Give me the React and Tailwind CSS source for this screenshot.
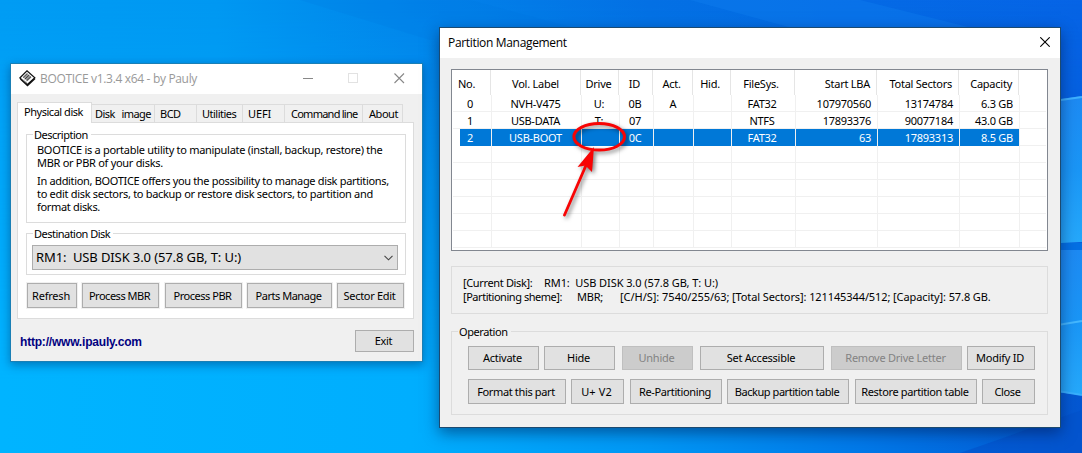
import React from "react";
import clsx from "clsx";

const TABS = [
  { label: "Disk  image", width: "w-[63px]", pad: "pl-[3px]", track: "tracking-[-0.55px] [word-spacing:1px]" },
  { label: "BCD", width: "w-[42px]", pad: "pl-[5px]", track: "tracking-[-0.5px]" },
  { label: "Utilities", width: "w-[46px]", pad: "pl-[5px]", track: "tracking-[-0.5px]" },
  { label: "UEFI", width: "w-[42px]", pad: "pl-[5px]", track: "tracking-[-0.1px]" },
  { label: "Command line", width: "w-[78px]", pad: "pl-[6px]", track: "tracking-[-0.75px]" },
  { label: "About", width: "w-[40px]", pad: "pl-[6px]", track: "tracking-[-0.45px]" },
];

const COLUMNS = [
  { key: "no", label: "No.", width: "w-[39px]", head: "pl-[5px]", cell: "pl-[14px]" },
  { key: "label", label: "Vol. Label", width: "w-[90px]", head: "text-center", cell: "text-center pr-[2px]" },
  { key: "drive", label: "Drive", width: "w-[38px]", head: "text-center pr-[2px]", cell: "text-center pr-[3px]" },
  { key: "id", label: "ID", width: "w-[34px]", head: "text-center pr-[2px]", cell: "text-center pr-[3px]" },
  { key: "act", label: "Act.", width: "w-[40px]", head: "text-center pr-[2px]", cell: "text-center pr-px" },
  { key: "hid", label: "Hid.", width: "w-[38px]", head: "text-center pr-[3px]", cell: "text-center" },
  { key: "fs", label: "FileSys.", width: "w-[64px]", head: "text-center pr-[3px]", cell: "text-center pr-[3px]" },
  { key: "lba", label: "Start LBA", width: "w-[82px]", head: "text-right pr-[6px]", cell: "text-right pr-[6px]" },
  { key: "total", label: "Total Sectors", width: "w-[82px]", head: "text-right pr-[6px]", cell: "text-right pr-[6px]" },
  { key: "cap", label: "Capacity", width: "w-[60px]", head: "text-right pr-[6px]", cell: "text-right pr-[6px]" },
];

const PARTITIONS = [
  { no: "0", label: "NVH-V475", drive: "U:", id: "0B", act: "A", fs: "FAT32", lba: "107970560", total: "13174784", cap: "6.3 GB" },
  { no: "1", label: "USB-DATA", drive: "T:", id: "07", fs: "NTFS", lba: "17893376", total: "90077184", cap: "43.0 GB" },
  { no: "2", label: "USB-BOOT", id: "0C", fs: "FAT32", lba: "63", total: "17893313", cap: "8.5 GB" },
  {},
  {},
  {},
  {},
  {},
  {},
];

const Button = ({ children, className, disabled }) => (
  <button
    disabled={disabled}
    className={clsx(
      "shrink-0 border whitespace-nowrap text-center leading-[13px] pb-px pr-[2px]",
      disabled
        ? "border-[#bfbfbf] bg-[#cccccc] text-[#838383]"
        : "border-[#adadad] bg-[#e1e1e1] text-black",
      className,
    )}
  >
    {children}
  </button>
);

const Group = ({ title, titleClass, className, children }) => (
  <fieldset className={clsx("border border-[#dcdcdc]", className)}>
    <legend className={clsx("ml-[6px] pl-[1px] pr-[3px] leading-[13px] whitespace-nowrap", titleClass)}>
      {title}
    </legend>
    {children}
  </fieldset>
);

const Wallpaper = () => (
  <svg className="absolute inset-0" width="1082" height="453" viewBox="0 0 1082 453" preserveAspectRatio="none">
    <defs>
      <linearGradient id="sky" x1="0" y1="0" x2="1" y2="0">
        <stop offset="0" stopColor="#009cf4" />
        <stop offset="0.2" stopColor="#0098f2" />
        <stop offset="0.38" stopColor="#0284ea" />
        <stop offset="0.6" stopColor="#0470e4" />
        <stop offset="1" stopColor="#0664e6" />
      </linearGradient>
      <linearGradient id="floor" x1="0" y1="0" x2="1" y2="0">
        <stop offset="0" stopColor="#00b4ff" />
        <stop offset="0.38" stopColor="#00aefe" />
        <stop offset="0.6" stopColor="#0097f5" />
        <stop offset="0.8" stopColor="#0078e8" />
        <stop offset="1" stopColor="#0457d2" />
      </linearGradient>
      <linearGradient id="fade" x1="0" y1="0" x2="0" y2="1">
        <stop offset="0" stopColor="#fff" stopOpacity="0" />
        <stop offset="0.85" stopColor="#fff" stopOpacity="1" />
      </linearGradient>
      <mask id="lower">
        <rect width="1082" height="453" fill="url(#fade)" />
      </mask>
      <linearGradient id="beam" x1="0" y1="0" x2="0" y2="1">
        <stop offset="0" stopColor="#1d8af3" />
        <stop offset="0.5" stopColor="#1a96f6" />
        <stop offset="1" stopColor="#26a9fb" />
      </linearGradient>
    </defs>
    <rect width="1082" height="453" fill="url(#sky)" />
    <rect width="1082" height="453" fill="url(#floor)" mask="url(#lower)" />
    <path d="M300 0 L470 0 L620 40 L430 40 Z" fill="#0070dc" opacity="0.15" />
    <path d="M690 0 L860 0 L980 30 L800 30 Z" fill="#1583f2" opacity="0.3" />
    <path d="M1040 102 L1082 96 L1082 242 L1040 244 Z" fill="url(#beam)" />
    <path d="M1040 103 L1082 97" stroke="#3fb2ff" strokeWidth="2" />
    <path d="M1040 243 H1082 V250 H1040 Z" fill="#0470e4" />
    <path d="M1040 250 H1082 V395 L1040 390 Z" fill="url(#beam)" />
    <path d="M1040 328 L1082 321" stroke="#45b8ff" strokeWidth="2" />
    <path d="M1040 388 L1082 395" stroke="#38b0ff" strokeWidth="2" />
    <path d="M960 453 Q1020 432 1082 410 V453 Z" fill="#0352cc" opacity="0.6" />
  </svg>
);

const DiskIcon = () => (
  <svg width="17" height="17" viewBox="0 0 17 17" className="-mt-px">
    <path d="M1 9.5 L9 2.5 L16.5 9 L8.5 16.5 Z" fill="#111" />
    <path d="M0.8 8 L8 0.8 L15.8 7.8 L8.4 14.4 Z" fill="#fff" stroke="#111" strokeWidth="1.2" />
    <path d="M4 7.2 L8.2 3.2 L12.6 7.2 L8.4 11.2 Z" fill="#999" />
    <path d="M4 7.6 L8.3 3.4 M5.8 9.2 L10.2 5 M7.6 10.8 L12 6.6" stroke="#333" strokeWidth="0.9" />
    <path d="M2.8 8.9 L8 13.2" stroke="#888" strokeWidth="1" />
  </svg>
);

const BooticeWindow = () => (
  <div className="absolute left-[10px] top-[63px] flex h-[299px] w-[413px] flex-col border border-[#1a7fb5] bg-[#f0f0f0] shadow-[0_3px_9px_rgba(0,30,80,0.4)]">
    <div className="flex h-[30px] shrink-0 items-center bg-white pl-[8px] font-['Open_Sans',sans-serif] text-[12px] tracking-[-0.33px] text-[#999]">
      <DiskIcon />
      <span className="ml-[4px] flex-1 whitespace-nowrap">BOOTICE v1.3.4 x64 - by Pauly</span>
      <svg width="107" height="12" viewBox="0 0 107 12" className="mr-[12px] -mt-[2px]" fill="none">
        <path d="M0 6.5 H10" stroke="#888" />
        <rect x="45.5" y="1.5" width="9" height="9" stroke="#e2e2e2" />
        <path d="M91.5 1.5 L101 11 M101 1.5 L91.5 11" stroke="#888" strokeWidth="1.1" />
      </svg>
    </div>

    <div className="flex items-end pl-[6px] pt-[8px] leading-[13px]">
      <div className="z-10 -mb-px h-[21px] w-[75px] border border-b-0 border-[#dcdcdc] bg-white pl-[6px] pt-[2px] tracking-[-0.47px]">
        Physical disk
      </div>
      {TABS.map((tab) => (
        <div
          key={tab.label}
          className={clsx(
            "h-[18px] border-r border-t border-[#dcdcdc] bg-[#f0f0f0] pt-[2px] whitespace-pre",
            tab.width,
            tab.pad,
            tab.track,
          )}
        >
          {tab.label}
        </div>
      ))}
    </div>

    <div className="ml-[6px] h-[197px] w-[397px] shrink-0 border border-[#dcdcdc] bg-white pl-[8px] pt-[5px]">
      <Group title="Description" className="h-[95px] w-[380px]" titleClass="tracking-[-0.5px]">
        <div className="pl-[10px] pt-[2px] leading-[13px] whitespace-nowrap">
          <p className="tracking-[-0.29px]">
            BOOTICE is a portable utility to manipulate (install, backup, restore) the
            <br />
            MBR or PBR of your disks.
          </p>
          <p className="mt-[5px] tracking-[-0.33px]">
            In addition, BOOTICE offers you the possibility to manage disk partitions,
            <br />
            <span className="tracking-[-0.3px]">to edit disk sectors, to backup or restore disk sectors, to partition and</span>
            <br />
            format disks.
          </p>
        </div>
      </Group>
      <Group title="Destination Disk" className="mt-[4px] h-[48px] w-[380px]" titleClass="tracking-[-0.52px]">
        <div className="ml-[5px] mt-[5px] flex h-[25px] w-[366px] items-center justify-between border border-[#adadad] bg-[#e1e1e1] pl-[3px] pr-[4px] text-[13px] tracking-[-0.11px]">
          <span className="whitespace-pre">RM1:  USB DISK 3.0 (57.8 GB, T: U:)</span>
          <svg width="9" height="6" viewBox="0 0 9 6" fill="none">
            <path d="M0.5 0.8 L4.5 4.8 L8.5 0.8" stroke="#444" strokeWidth="1.1" />
          </svg>
        </div>
      </Group>
      <div className="mt-[8px] flex tracking-[-0.48px]">
        <Button className="ml-px h-[25px] w-[50px] shadow-[0_0_0_1px_#f0f0f0] tracking-[-0.2px]">Refresh</Button>
        <Button className="ml-[5px] h-[25px] w-[77px] shadow-[0_0_0_1px_#f0f0f0]">Process MBR</Button>
        <Button className="ml-[6px] h-[25px] w-[77px] shadow-[0_0_0_1px_#f0f0f0]">Process PBR</Button>
        <Button className="ml-[5px] h-[25px] w-[85px] shadow-[0_0_0_1px_#f0f0f0]">Parts Manage</Button>
        <Button className="ml-[5px] h-[25px] w-[67px] shadow-[0_0_0_1px_#f0f0f0] tracking-[-0.3px]">Sector Edit</Button>
      </div>
    </div>

    <div className="mt-[11px] flex items-center justify-between pl-[9px] pr-[8px]">
      <a className="mt-[2px] font-['Liberation_Sans',sans-serif] text-[12px] font-bold tracking-[-0.2px] text-[#000080]">
        http://www.ipauly.com
      </a>
      <Button className="h-[22px] w-[59px]">Exit</Button>
    </div>
  </div>
);

const PartitionTable = () => (
  <div className="h-[182px] w-[597px] border border-[#828790] bg-white pl-px">
    <div className="flex h-[25px] leading-[27px]">
      {COLUMNS.map((col) => (
        <div
          key={col.key}
          className={clsx("mr-px -ml-px border-r border-[#e5e5e5] first:ml-0 first:mr-px first:w-[38px]", col.width, col.head, "whitespace-nowrap")}
        >
          {col.label}
        </div>
      ))}
    </div>
    {PARTITIONS.map((row, i) => (
      <div key={i} className="flex h-[17px] w-[593px] border-b border-[#f0f0f0] leading-[17px]">
        {COLUMNS.map((col) => (
          <div
            key={col.key}
            className={clsx(
              "h-[17px] border-r border-[#f0f0f0] whitespace-nowrap",
              col.width,
              col.cell,
              i === 2 && "bg-[#0078d7] bg-clip-padding text-white",
              i === 2 && col.key === "no" && "bg-[linear-gradient(to_right,white_7px,#0078d7_7px)]",
            )}
          >
            {row[col.key]}
          </div>
        ))}
      </div>
    ))}
  </div>
);

const PartitionWindow = () => (
  <div className="absolute left-[439px] top-[27px] h-[401px] w-[622px] border border-[#1c4a70] bg-[#f0f0f0] shadow-[0_5px_14px_rgba(0,20,70,0.5)]">
    <div className="flex h-[30px] items-center justify-between bg-white pl-[8px] pr-[10px] font-['Open_Sans',sans-serif] text-[12px] tracking-[-0.33px]">
      <span>Partition Management</span>
      <svg width="10" height="10" viewBox="0 0 10 10" className="-mt-[2px]" fill="none">
        <path d="M0.3 0.3 L9.7 9.7 M9.7 0.3 L0.3 9.7" stroke="#000" strokeWidth="1.1" />
      </svg>
    </div>
    <div className="px-[11px] pt-[11px] tracking-[-0.25px]">
      <PartitionTable />
      <div className="mt-[15px] h-[48px] w-[597px] border border-[#dcdcdc] pl-[11px] pt-[9px] leading-[14px] whitespace-pre">
        <div className="flex">
          <span className="w-[81px] tracking-[-0.35px]">[Current Disk]:</span>
          <span className="tracking-[-0.08px]">RM1:  USB DISK 3.0 (57.8 GB, T: U:)</span>
        </div>
        <div className="flex">
          <span className="w-[114px] tracking-[-0.46px]">[Partitioning sheme]:</span>
          <span className="w-[43px]">MBR;</span>
          <span className="w-[112px] tracking-[-0.03px]">[C/H/S]: 7540/255/63;</span>
          <span className="tracking-[-0.1px]">[Total Sectors]: 121145344/512; [Capacity]: 57.8 GB.</span>
        </div>
      </div>
      <Group title="Operation" className="mt-[11px] h-[90px] w-[597px]" titleClass="tracking-[-0.4px]">
        <div className="ml-[16px] mt-[8px] flex">
          <Button className="h-[24px] w-[71px]">Activate</Button>
          <Button className="ml-[5px] h-[24px] w-[71px]">Hide</Button>
          <Button className="ml-[7px] h-[24px] w-[71px]" disabled>Unhide</Button>
          <Button className="ml-[7px] h-[24px] w-[124px]">Set Accessible</Button>
          <Button className="ml-[7px] h-[24px] w-[131px]" disabled>Remove Drive Letter</Button>
          <Button className="ml-[5px] h-[24px] w-[68px]">Modify ID</Button>
        </div>
        <div className="ml-[16px] mt-[9px] flex tracking-[-0.36px]">
          <Button className="h-[25px] w-[98px]">Format this part</Button>
          <Button className="ml-[5px] h-[25px] w-[53px] tracking-[0.1px]">U+ V2</Button>
          <Button className="ml-[6px] h-[25px] w-[92px]">Re-Partitioning</Button>
          <Button className="ml-[5px] h-[25px] w-[122px] tracking-[-0.45px]">Backup partition table</Button>
          <Button className="ml-[6px] h-[25px] w-[122px]">Restore partition table</Button>
          <Button className="ml-[5px] h-[25px] w-[53px]">Close</Button>
        </div>
      </Group>
    </div>
  </div>
);

const Annotation = () => (
  <svg
    className="absolute left-[550px] top-[110px] drop-shadow-[2px_2px_2px_rgba(0,0,0,0.5)]"
    width="90"
    height="120"
    viewBox="550 110 90 120"
  >
    <ellipse cx="599.2" cy="136.8" rx="25.3" ry="13.3" fill="none" stroke="#f80404" strokeWidth="3" />
    <path d="M564.5 215 L587 163" stroke="#f80404" strokeWidth="2.8" strokeLinecap="round" />
    <path d="M594 147 L577.5 167 L585.5 165.5 L592 172 Z" fill="#f80404" />
  </svg>
);

export default function App() {
  return (
    <div className="relative h-[453px] w-[1082px] overflow-hidden bg-[#0098f0] font-['Noto_Sans',sans-serif] text-[11px] tracking-[-0.32px] text-black">
      <Wallpaper />
      <BooticeWindow />
      <PartitionWindow />
      <Annotation />
    </div>
  );
}
